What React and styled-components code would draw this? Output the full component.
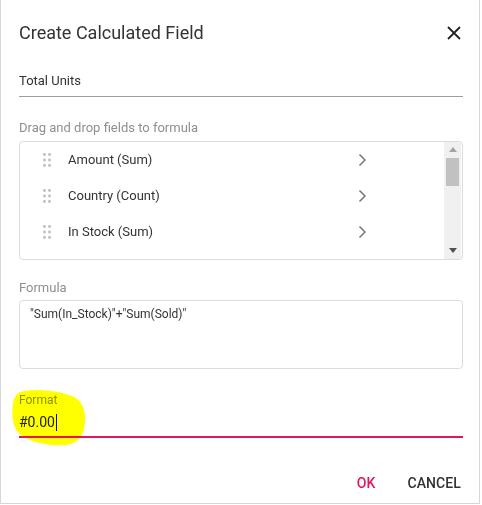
import React from "react";
import styled, { createGlobalStyle } from "styled-components";

const Global = createGlobalStyle`
  html, body { margin: 0; padding: 0; background: #fff; }
  body { font-family: Roboto, "Noto Sans", "Liberation Sans", sans-serif; }
`;

const Dialog = styled.div`
  position: relative;
  box-sizing: border-box;
  width: 480px;
  height: 504px;
  background: #fff;
  border: 1px solid #d6d6d6;
  border-top: none;
  padding: 0 16px 0 18px;
  display: flex;
  flex-direction: column;
`;

const Header = styled.div`
  height: 66px;
  display: flex;
  align-items: center;
  justify-content: space-between;
`;

const Title = styled.h1`
  margin: 0;
  font-size: 18px;
  font-weight: 400;
  color: #333;
  line-height: 30px;
`;

const CloseBtn = styled.button`
  border: none;
  background: none;
  padding: 0;
  margin-right: 1px;
  width: 16px;
  height: 16px;
  display: flex;
  align-items: center;
  justify-content: center;
`;

const NameField = styled.div`
  margin-top: 5px;
  font-size: 13px;
  line-height: 20px;
  color: #333;
  padding-bottom: 5px;
  border-bottom: 1px solid #9e9e9e;
`;

const Label = styled.div`
  margin-top: ${(p) => p.$mt}px;
  font-size: 13px;
  line-height: 18px;
  color: #8f8f8f;
`;

const ListBox = styled.div`
  margin-top: 4px;
  height: 120px;
  box-sizing: border-box;
  border: 1px solid #dcdcdc;
  border-radius: 4px;
  display: flex;
  overflow: hidden;
`;

const Rows = styled.div`
  flex: 1;
  display: flex;
  flex-direction: column;
`;

const Row = styled.div`
  height: 36px;
  display: flex;
  align-items: center;
  padding-left: 23px;
  font-size: 13px;
  color: #333;
`;

const RowText = styled.span`
  margin-left: 17px;
  flex: 1;
`;

const Chevron = styled.span`
  width: 8px;
  margin-right: 78px;
  display: flex;
`;

const Scrollbar = styled.div`
  width: 17px;
  background: #f0f0f0;
  display: flex;
  flex-direction: column;
  align-items: center;
  margin-right: 1px;
`;

const ArrowBox = styled.div`
  height: 16px;
  display: flex;
  align-items: center;
  justify-content: center;
`;

const Thumb = styled.div`
  width: 13px;
  height: 28px;
  background: #c1c1c1;
`;

const TrackSpace = styled.div`
  flex: 1;
`;

const FormulaBox = styled.div`
  margin-top: 3px;
  height: 70px;
  box-sizing: border-box;
  border: 1px solid #dcdcdc;
  border-radius: 4px;
  padding: 6px 10px;
  font-size: 12px;
  line-height: 14px;
  color: #333;
`;

const FormatWrap = styled.div`
  position: relative;
  margin-top: 24px;
`;

const Highlight = styled.svg`
  position: absolute;
  left: -7px;
  top: -5px;
  width: 76px;
  height: 58px;
`;

const FormatLabel = styled.div`
  position: relative;
  font-size: 12px;
  line-height: 14px;
  color: #8f8f8f;
  mix-blend-mode: multiply;
`;

const FormatInput = styled.div`
  position: relative;
  font-size: 14px;
  line-height: 20px;
  color: #222;
  padding-top: 5px;
  padding-bottom: 4px;
  border-bottom: 2px solid #e3165b;
  display: flex;
  align-items: center;
`;

const Caret = styled.span`
  display: inline-block;
  width: 1px;
  height: 17px;
  background: #111;
  margin-left: 1px;
`;

const Footer = styled.div`
  margin-top: 25px;
  height: 40px;
  display: flex;
  align-items: center;
  justify-content: flex-end;
  gap: 32px;
  padding-right: 2px;
`;

const Btn = styled.button`
  border: none;
  background: none;
  padding: 0;
  font-family: Roboto, "Liberation Sans", sans-serif;
  font-size: 14px;
  font-weight: 500;
  color: ${(p) => (p.$primary ? "#e3165b" : "#333")};
  text-transform: uppercase;
  letter-spacing: 0.1px;
`;

const DragIcon = () => (
  <svg width="8" height="14" viewBox="0 0 8 14">
    {[1.5, 7, 12.5].map((y) =>
      [1.5, 6.5].map((x) => <circle key={`${x}-${y}`} cx={x} cy={y} r="1.4" fill="#bdbdbd" />)
    )}
  </svg>
);

const ChevronIcon = () => (
  <svg width="8" height="14" viewBox="0 0 8 14">
    <path d="M1.5 1.5 L7 7 L1.5 12.5" fill="none" stroke="#757575" strokeWidth="1.5" />
  </svg>
);

const fields = ["Amount (Sum)", "Country (Count)", "In Stock (Sum)"];

export default function App() {
  return (
    <>
      <Global />
      <Dialog>
        <Header>
          <Title>Create Calculated Field</Title>
          <CloseBtn aria-label="close">
            <svg width="14" height="14" viewBox="0 0 14 14">
              <path d="M1 1 L13 13 M13 1 L1 13" stroke="#222" strokeWidth="1.8" />
            </svg>
          </CloseBtn>
        </Header>
        <NameField>Total Units</NameField>
        <Label $mt={22}>Drag and drop fields to formula</Label>
        <ListBox>
          <Rows>
            {fields.map((f) => (
              <Row key={f}>
                <DragIcon />
                <RowText>{f}</RowText>
                <Chevron>
                  <ChevronIcon />
                </Chevron>
              </Row>
            ))}
          </Rows>
          <Scrollbar>
            <ArrowBox>
              <svg width="8" height="5" viewBox="0 0 8 5">
                <path d="M0 5 L4 0 L8 5 Z" fill="#a3a3a3" />
              </svg>
            </ArrowBox>
            <Thumb />
            <TrackSpace />
            <ArrowBox>
              <svg width="8" height="5" viewBox="0 0 8 5">
                <path d="M0 0 L8 0 L4 5 Z" fill="#505050" />
              </svg>
            </ArrowBox>
          </Scrollbar>
        </ListBox>
        <Label $mt={19}>Formula</Label>
        <FormulaBox>"Sum(In_Stock)"+"Sum(Sold)"</FormulaBox>
        <FormatWrap>
          <Highlight viewBox="0 0 76 58">
            <path
              d="M8 4 C20 0 46 2 60 8 C70 12 74 22 73 34 C72 46 68 55 54 57 C42 58 28 56 18 52 C6 48 1 40 0.5 28 C0 16 1 8 8 4 Z"
              fill="#ffff00"
            />
          </Highlight>
          <FormatLabel>Format</FormatLabel>
          <FormatInput>
            #0.00
            <Caret />
          </FormatInput>
        </FormatWrap>
        <Footer>
          <Btn $primary>OK</Btn>
          <Btn>Cancel</Btn>
        </Footer>
      </Dialog>
    </>
  );
}
